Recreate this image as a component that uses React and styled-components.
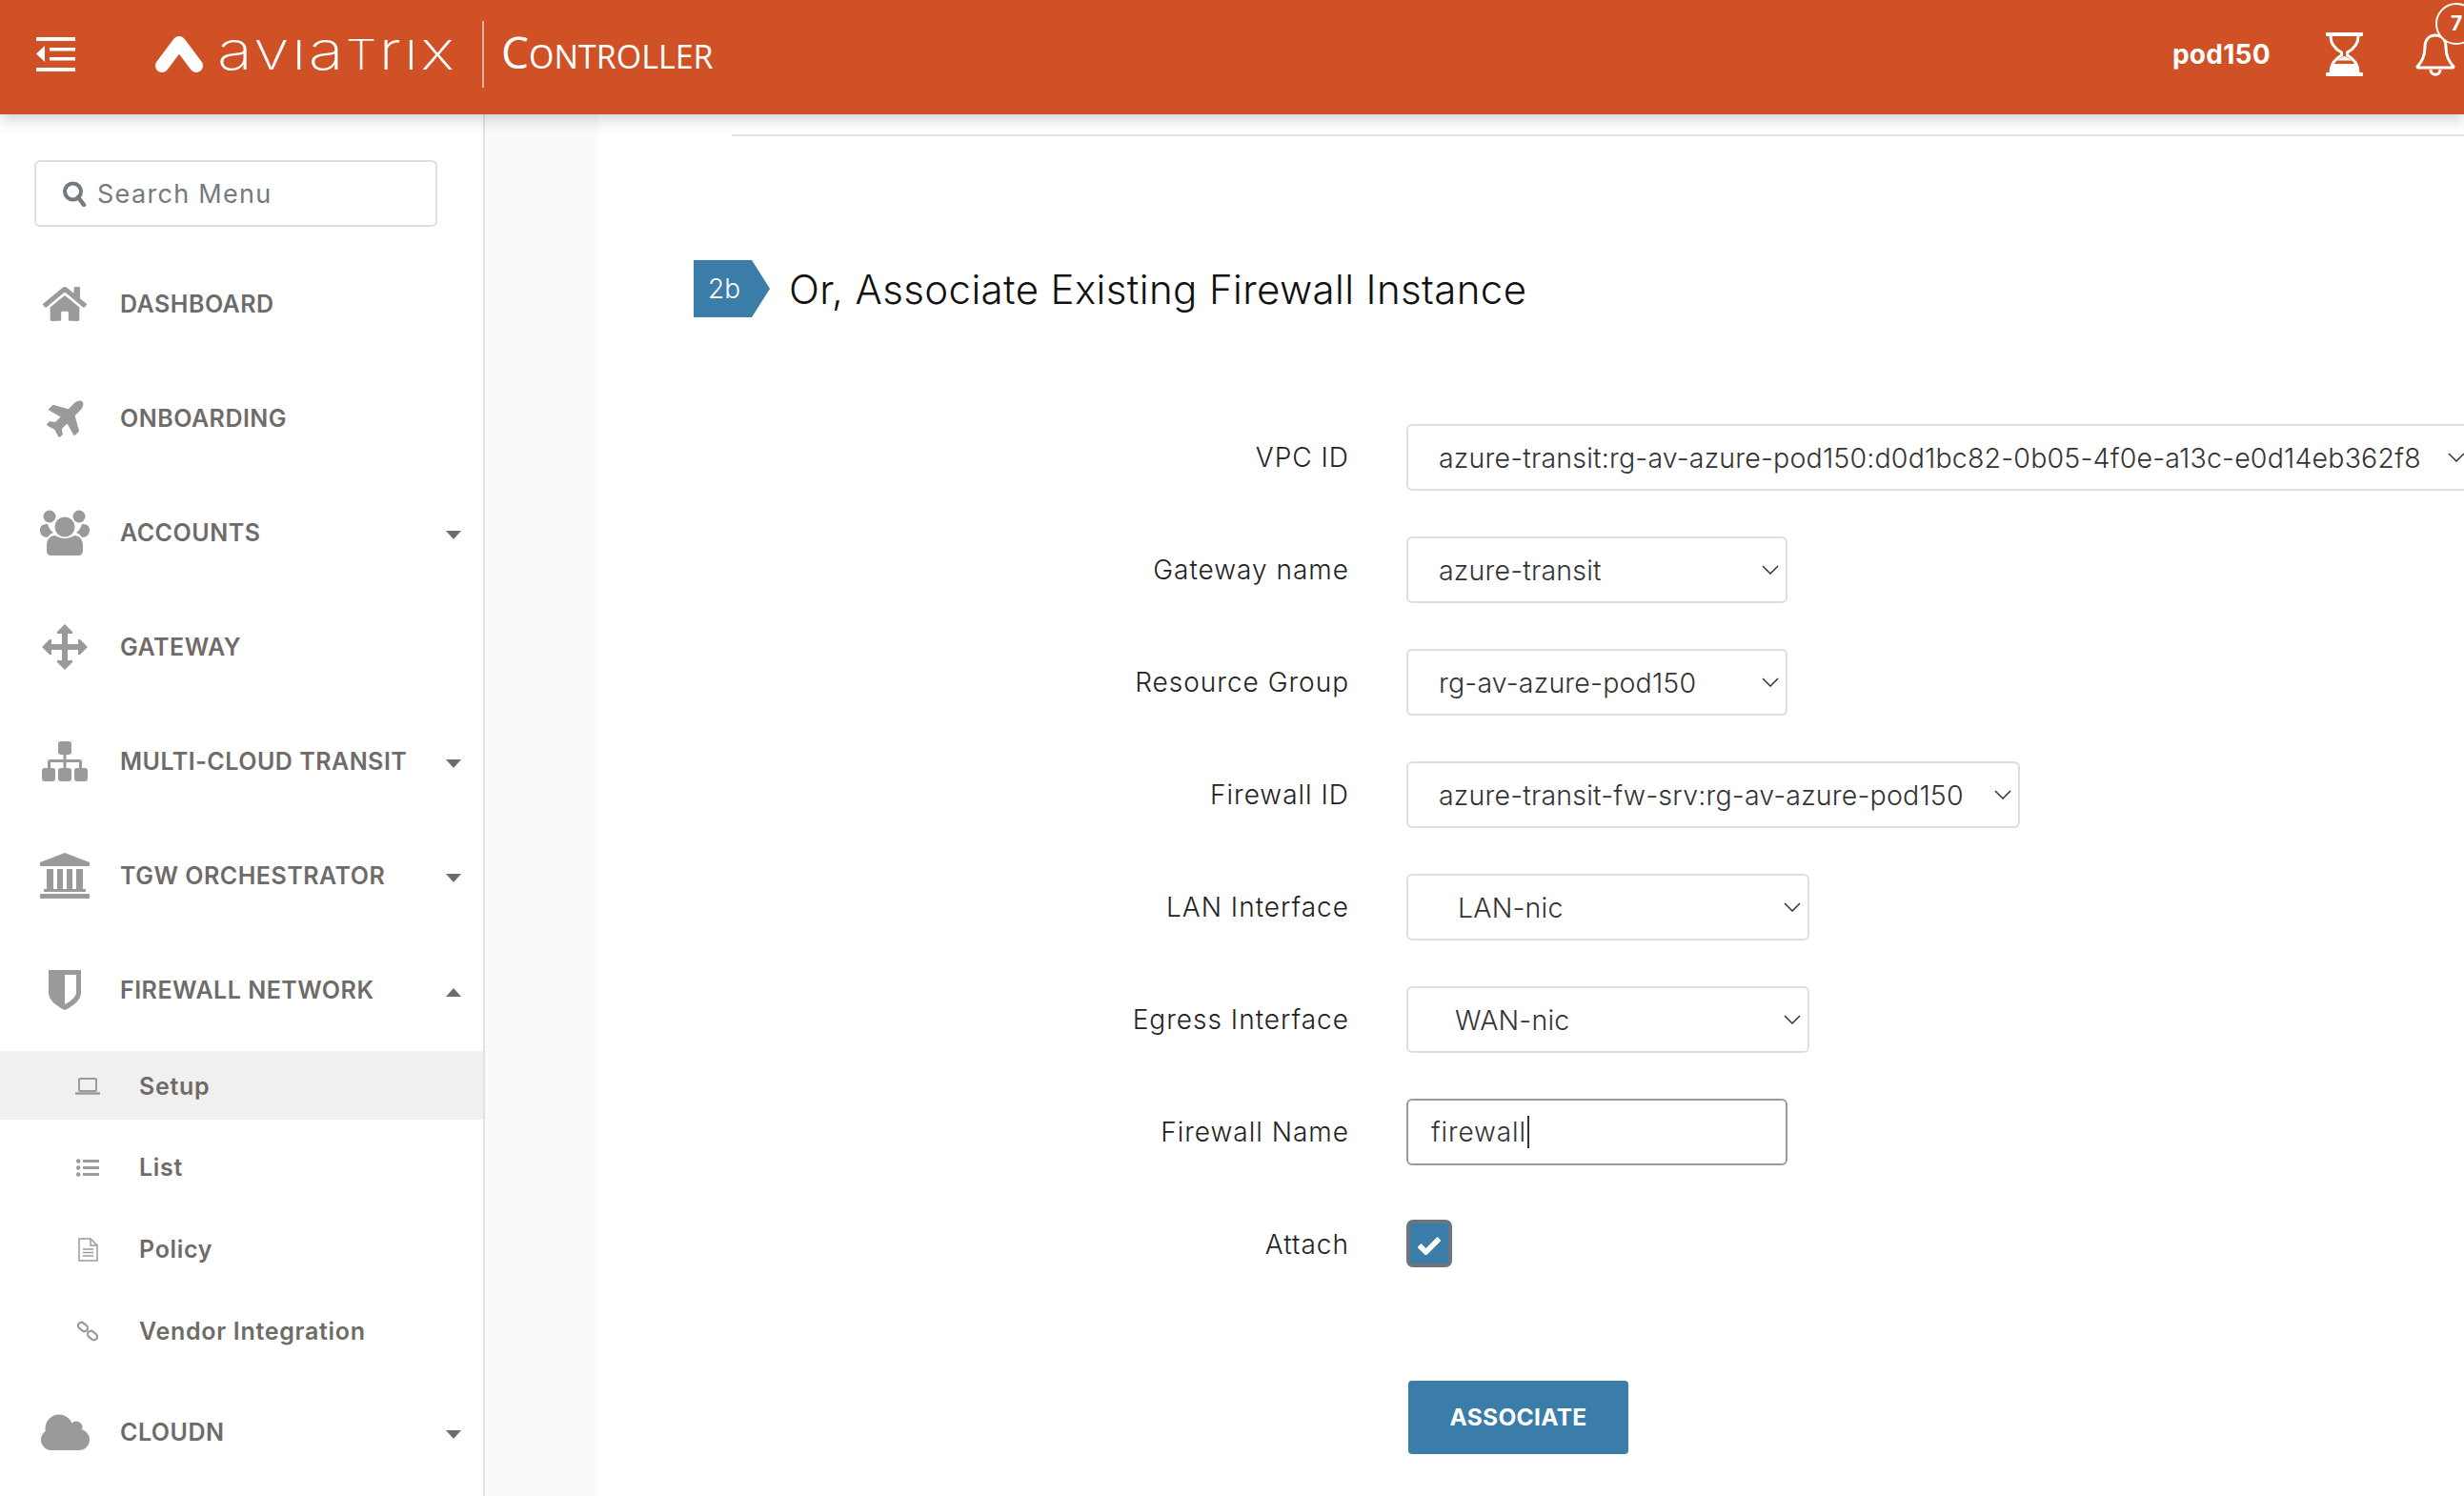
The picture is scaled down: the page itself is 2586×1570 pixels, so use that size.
import React from "react";
import styled, { createGlobalStyle } from "styled-components";
import { FaPlane, FaHome } from "react-icons/fa";

const UI_FONT = `Inter, "Open Sans", "Liberation Sans", sans-serif`;
const BLUE = "#3a7da9";

const GlobalStyle = createGlobalStyle`
  html, body {
    margin: 0;
    padding: 0;
    background: #fff;
    overflow: hidden;
  }
  * { box-sizing: border-box; }
`;

const Page = styled.div`
  width: 2586px;
  height: 1570px;
  display: flex;
  flex-direction: column;
  overflow: hidden;
  font-family: ${UI_FONT};
`;

/* header */
const Header = styled.header`
  position: relative;
  z-index: 2;
  flex: 0 0 120px;
  display: flex;
  align-items: center;
  background: #d05125;
  color: #fff;
  padding: 0 0 7px 38px;
  box-shadow: 0 6px 14px rgba(70, 80, 95, 0.24);
`;
const LogoMark = styled.svg`
  width: 52px;
  height: 38px;
  margin-left: 83px;
  margin-right: 14px;
`;
const Wordmark = styled.div`
  width: 246px;
  font-weight: 200;
  font-size: 57px;
  line-height: 60px;
  letter-spacing: 2px;
  margin-top: -4px;
  white-space: nowrap;
  transform: scaleX(1.2);
  transform-origin: left center;
  span {
    font-size: 43px;
  }
`;
const Divider = styled.div`
  width: 2px;
  height: 70px;
  margin: 0 18px 0 32px;
  background: rgba(255, 255, 255, 0.55);
`;
const Product = styled.div`
  font-family: "Open Sans", sans-serif;
  font-size: 34px;
  line-height: 40px;
  white-space: nowrap;
  span {
    font-size: 46px;
  }
`;
const HeaderRight = styled.div`
  margin-left: auto;
  display: flex;
  align-items: center;
`;
const UserName = styled.div`
  font-size: 28px;
  font-weight: 700;
  letter-spacing: 0.3px;
  margin-right: 58px;
`;
const BellWrap = styled.div`
  position: relative;
  width: 42px;
  height: 46px;
  margin-left: 55px;
  margin-right: 9px;
`;
const BellBadge = styled.div`
  position: absolute;
  left: 21px;
  top: -31px;
  width: 44px;
  height: 44px;
  border: 2px solid #fff;
  border-radius: 50%;
  background: #d05125;
  font-size: 21px;
  font-weight: 700;
  line-height: 40px;
  text-align: center;
`;

/* layout under the header */
const Body = styled.div`
  flex: 1;
  display: flex;
  min-height: 0;
`;
const Sidebar = styled.aside`
  flex: 0 0 509px;
  border-right: 2px solid #e2e2e2;
  background: #fff;
  padding-top: 48px;
`;
const Gutter = styled.div`
  flex: 0 0 119px;
  background: #f9fafa;
`;
const Main = styled.main`
  flex: 1;
  min-width: 0;
  background: #fff;
  padding-top: 21px;
`;

/* sidebar */
const SearchBox = styled.div`
  width: 423px;
  height: 70px;
  margin-left: 36px;
  margin-bottom: 20px;
  display: flex;
  align-items: center;
  padding-left: 27px;
  gap: 11px;
  border: 2px solid #dedede;
  border-radius: 6px;
  color: #737a80;
  font-size: 27px;
  letter-spacing: 1.3px;
`;
const NavRow = styled.div`
  height: 120px;
  padding-top: 2px;
  display: flex;
  align-items: center;
  color: #6f6b68;
  font-size: 25px;
  font-weight: 600;
  letter-spacing: 0.5px;
  white-space: nowrap;
`;
const NavIcon = styled.div`
  flex: 0 0 56px;
  margin-left: 40px;
  margin-right: 30px;
  display: flex;
  justify-content: center;
  color: #9b9a99;
`;
const Caret = styled.div`
  margin-left: auto;
  margin-right: 23px;
  width: 0;
  height: 0;
  border-left: 8px solid transparent;
  border-right: 8px solid transparent;
  border-top: ${(p) => (p.$up ? "0" : "9px solid #6f6b68")};
  border-bottom: ${(p) => (p.$up ? "9px solid #6f6b68" : "0")};
  margin-top: 4px;
`;
const PlaneIcon = styled(FaPlane)`
  transform: translate(3px, -2px) rotate(-45deg);
`;
const SubList = styled.div`
  margin-top: 5px;
  margin-bottom: 3px;
`;
const SubRow = styled.div`
  height: ${(p) => (p.$active ? "72px" : "86px")};
  margin-bottom: ${(p) => (p.$active ? "6px" : "0")};
  padding-top: 2px;
  background: ${(p) => (p.$active ? "#f0f0f0" : "transparent")};
  display: flex;
  align-items: center;
  color: #6f6b68;
  font-size: 25px;
  font-weight: 600;
  letter-spacing: 0.7px;
`;
const SubIcon = styled.div`
  flex: 0 0 32px;
  margin-left: 76px;
  margin-right: 38px;
  display: flex;
  justify-content: center;
  color: #9b9a99;
`;

/* main panel */
const Rule = styled.div`
  height: 2px;
  margin-left: 140px;
  background: #e2e2e2;
`;
const Heading = styled.div`
  margin-top: 130px;
  margin-left: 100px;
  display: flex;
  align-items: center;
  height: 60px;
`;
const StepBadge = styled.div`
  width: 80px;
  height: 60px;
  padding-left: 15px;
  background: ${BLUE};
  clip-path: polygon(0 0, 61px 0, 100% 50%, 61px 100%, 0 100%);
  color: #fff;
  font-size: 28px;
  font-weight: 300;
  line-height: 60px;
`;
const Title = styled.h2`
  margin: 0 0 0 20px;
  font-size: 42px;
  font-weight: 300;
  color: #111;
  letter-spacing: 0.38px;
  white-space: nowrap;
`;
const Form = styled.div`
  margin-top: 112px;
  display: flex;
  flex-direction: column;
  gap: 48px;
`;
const Row = styled.div`
  height: 70px;
  display: flex;
  align-items: center;
`;
const Label = styled.label`
  flex: 0 0 788px;
  margin-right: 60px;
  text-align: right;
  font-size: 28px;
  font-weight: 350;
  color: #222;
  letter-spacing: 1px;
`;
const SelectWrap = styled.div`
  position: relative;
  flex: 0 0 ${(p) => p.$width}px;
  height: 70px;
`;
const Select = styled.select`
  appearance: none;
  width: 100%;
  height: 100%;
  padding: 0 0 0 ${(p) => p.$pad}px;
  border: 2px solid #dedede;
  border-radius: 6px;
  background: #fff;
  color: #333;
  font-family: ${UI_FONT};
  font-size: 28.5px;
  font-weight: 350;
  letter-spacing: 0.2px;
`;
const Chevron = styled.svg`
  position: absolute;
  right: 9px;
  top: 30px;
  width: 18px;
  height: 10px;
  pointer-events: none;
`;
const TextField = styled.div`
  flex: 0 0 400px;
  height: 70px;
  display: flex;
  align-items: center;
  padding-left: 24px;
  border: 2px solid #999;
  border-radius: 6px;
  color: #333;
  font-size: 28px;
  font-weight: 350;
  letter-spacing: 0.9px;
`;
const TextCaret = styled.span`
  width: 2px;
  height: 34px;
  margin-left: 1px;
  background: #333;
`;
const Check = styled.div`
  width: 48px;
  height: 50px;
  margin-bottom: 2px;
  border: 4px solid #6c7480;
  border-radius: 7px;
  background: ${BLUE};
  display: flex;
  align-items: center;
  justify-content: center;
  padding-top: 4px;
`;
const AssociateButton = styled.button`
  display: block;
  width: 231px;
  height: 77px;
  margin: 108px 0 0 850px;
  padding: 0 0 2px;
  border: 0;
  border-radius: 4px;
  background: ${BLUE};
  color: #fff;
  font-family: ${UI_FONT};
  font-size: 24.5px;
  font-weight: 700;
  letter-spacing: 0.3px;
`;

/* icons */
const MenuIcon = () => (
  <svg width="41" height="36" viewBox="0 0 41 36" fill="#fff">
    <rect y="0" width="41" height="4" />
    <rect x="14" y="11" width="27" height="3.5" />
    <rect x="14" y="21" width="27" height="3.5" />
    <rect y="32" width="41" height="4" />
    <path d="M9 9v17L0 17.5z" />
  </svg>
);
const SearchIcon = () => (
  <svg width="26" height="28" viewBox="0 0 26 28" fill="none" stroke="#737a80">
    <circle cx="11.5" cy="12" r="8.5" strokeWidth="4" />
    <path d="M17 18l6 8" strokeWidth="4.5" strokeLinecap="round" />
  </svg>
);
const Hourglass = () => (
  <svg width="39" height="46" viewBox="0 0 39 46" fill="#fff">
    <rect width="39" height="4" rx="1" />
    <rect y="42" width="39" height="4" rx="1" />
    <path
      d="M5 4c0 8 4 13 11.500 17v3C9 28 5 34 5 42M34 4c0 8-4 13-11.500 17v3C30 28 34 34 34 42"
      fill="none"
      stroke="#fff"
      strokeWidth="3"
    />
    <path d="M5 42c0-3 .5-6 2-9h25c1.500 3 2 6 2 9z" />
    <path d="M12 29.500c2-2 4.500-3.500 7.500-4.500 3 1 5.500 2.500 7.500 4.500z" />
  </svg>
);
const Bell = () => (
  <svg width="42" height="46" viewBox="0 0 42 46" fill="none" stroke="#fff" strokeWidth="3">
    <path d="M21 3c-7 0-11 5-11 12 0 10-3 15-8 21 0 1 0 1 1 1h36c1 0 1 0 1-1-5-6-8-11-8-21 0-7-4-12-11-12z" strokeLinejoin="round" />
    <path d="M16 39c0 7 10 7 10 0" />
  </svg>
);

const IconUsers = () => (
  <svg width="52" height="48" viewBox="0 0 52 48" fill="currentColor">
    <circle cx="10" cy="7" r="6.500" />
    <circle cx="41" cy="7" r="6.500" />
    <path d="M0 21c0-4 3-6 8-6 1 4 3 7 6 9-3 1-5 3-6 5-5 0-8-3-8-8z" />
    <path d="M52 21c0-4-3-6-8-6-1 4-3 7-6 9 3 1 5 3 6 5 5 0 8-3 8-8z" />
    <circle cx="26" cy="18" r="10.500" />
    <path d="M7 37c0-6 4-10 9-10 3 2 6 3 10 3s7-1 10-3c5 0 9 4 9 10v6c0 3-2 5-5 5H12c-3 0-5-2-5-5z" />
  </svg>
);
const IconMove = () => (
  <svg width="48" height="48" viewBox="0 0 48 48" fill="currentColor">
    <path d="M24 0l8 8v2h-5v11h11v-5h2l8 8-8 8h-2v-5H27v11h5v2l-8 8-8-8v-2h5V27H10v5H8l-8-8 8-8h2v5h11V10h-5V8z" />
  </svg>
);
const IconSitemap = () => (
  <svg width="48" height="42" viewBox="0 0 48 42" fill="currentColor">
    <rect x="17" y="0" width="14" height="14" rx="3" />
    <rect x="0" y="28" width="14" height="14" rx="3" />
    <rect x="17" y="28" width="14" height="14" rx="3" />
    <rect x="34" y="28" width="14" height="14" rx="3" />
    <path d="M22.500 14h3v5H39c2 0 3 1 3 3v6h-3v-6h-13.500v6h-3v-6H9v6H6v-6c0-2 1-3 3-3h13.500z" />
  </svg>
);
const IconBank = () => (
  <svg width="52" height="48" viewBox="0 0 52 48" fill="currentColor">
    <path d="M26 0l26 10v4H0v-4z" />
    <rect x="7" y="17" width="7" height="21" />
    <rect x="18" y="17" width="6" height="21" />
    <rect x="28" y="17" width="6" height="21" />
    <rect x="38" y="17" width="7" height="21" />
    <rect x="4" y="38" width="44" height="3" />
    <rect y="43" width="52" height="5" rx="1" />
  </svg>
);
const IconShield = () => (
  <svg width="34" height="42" viewBox="0 0 34 42" fill="currentColor" fillRule="evenodd">
    <path d="M1 0h32c.6 0 1 .4 1 1v23c0 8-10 15-17 18C10 39 0 32 0 24V1c0-.6.4-1 1-1zm16 5v31c6-3 12-8 12-12.500V5z" />
  </svg>
);
const IconCloud = () => (
  <svg width="52" height="38" viewBox="0 0 52 38" fill="currentColor">
    <circle cx="20" cy="15" r="14.500" />
    <circle cx="38" cy="14" r="6.500" />
    <circle cx="12" cy="27" r="11" />
    <circle cx="41" cy="27" r="11" />
    <rect x="12" y="20" width="29" height="18" />
  </svg>
);
const IconLaptop = () => (
  <svg width="26" height="18" viewBox="0 0 26 18" fill="none" stroke="currentColor">
    <rect x="4" y="1" width="18" height="13" rx="1" strokeWidth="2" />
    <path d="M0 16.500h26" strokeWidth="2.500" />
  </svg>
);
const IconList = () => (
  <svg width="24" height="19" viewBox="0 0 24 19" fill="currentColor">
    <circle cx="2.200" cy="2.500" r="2.200" />
    <circle cx="2.200" cy="9.500" r="2.200" />
    <circle cx="2.200" cy="16.500" r="2.200" />
    <rect x="7" y="1" width="17" height="3" />
    <rect x="7" y="8" width="17" height="3" />
    <rect x="7" y="15" width="17" height="3" />
  </svg>
);
const IconDoc = () => (
  <svg width="21" height="25" viewBox="0 0 21 25" fill="none" stroke="currentColor" strokeWidth="1.500">
    <path d="M1 1h12l7 7v16H1z" />
    <path d="M13 1v7h7M5 12h11M5 15.500h11M5 19h11" />
  </svg>
);
const IconChain = () => (
  <svg width="22" height="22" viewBox="0 0 22 22" fill="none" stroke="currentColor" strokeWidth="2.200">
    <rect x="0.500" y="3" width="11" height="7" rx="3.500" transform="rotate(40 6 6.500)" />
    <rect x="10.500" y="12" width="11" height="7" rx="3.500" transform="rotate(40 16 15.500)" />
  </svg>
);

const navTop = [
  { label: "DASHBOARD", icon: <FaHome size={46} /> },
  { label: "ONBOARDING", icon: <PlaneIcon size={44} /> },
  { label: "ACCOUNTS", icon: <IconUsers />, caret: "down" },
  { label: "GATEWAY", icon: <IconMove /> },
  { label: "MULTI-CLOUD TRANSIT", icon: <IconSitemap />, caret: "down" },
  { label: "TGW ORCHESTRATOR", icon: <IconBank />, caret: "down" },
  { label: "FIREWALL NETWORK", icon: <IconShield />, caret: "up" },
];
const subNav = [
  { label: "Setup", icon: <IconLaptop />, active: true },
  { label: "List", icon: <IconList /> },
  { label: "Policy", icon: <IconDoc /> },
  { label: "Vendor Integration", icon: <IconChain /> },
];
const selects = [
  { label: "VPC ID", value: "azure-transit:rg-av-azure-pod150:d0d1bc82-0b05-4f0e-a13c-e0d14eb362f8", width: 1120, pad: 32 },
  { label: "Gateway name", value: "azure-transit", width: 400, pad: 32 },
  { label: "Resource Group", value: "rg-av-azure-pod150", width: 400, pad: 32 },
  { label: "Firewall ID", value: "azure-transit-fw-srv:rg-av-azure-pod150", width: 644, pad: 32 },
  { label: "LAN Interface", value: "LAN-nic", width: 423, pad: 52 },
  { label: "Egress Interface", value: "WAN-nic", width: 423, pad: 49 },
];

const NavItem = ({ item }) => (
  <NavRow>
    <NavIcon>{item.icon}</NavIcon>
    {item.label}
    {item.caret && <Caret $up={item.caret === "up"} />}
  </NavRow>
);

export default function App() {
  return (
    <Page>
      <GlobalStyle />
      <Header>
        <MenuIcon />
        <LogoMark viewBox="0 0 52 38">
          <path
            d="M8 31L26 7l18 24"
            fill="none"
            stroke="#fff"
            strokeWidth="14"
            strokeLinecap="round"
            strokeLinejoin="round"
          />
        </LogoMark>
        <Wordmark>
          avıa<span>T</span>rıx
        </Wordmark>
        <Divider />
        <Product>
          <span>C</span>ONTROLLER
        </Product>
        <HeaderRight>
          <UserName>pod150</UserName>
          <Hourglass />
          <BellWrap>
            <Bell />
            <BellBadge>7</BellBadge>
          </BellWrap>
        </HeaderRight>
      </Header>
      <Body>
        <Sidebar>
          <SearchBox>
            <SearchIcon />
            Search Menu
          </SearchBox>
          {navTop.map((item) => (
            <NavItem key={item.label} item={item} />
          ))}
          <SubList>
            {subNav.map((item) => (
              <SubRow key={item.label} $active={item.active}>
                <SubIcon>{item.icon}</SubIcon>
                {item.label}
              </SubRow>
            ))}
          </SubList>
          <NavItem item={{ label: "CLOUDN", icon: <IconCloud />, caret: "down" }} />
        </Sidebar>
        <Gutter />
        <Main>
          <Rule />
          <Heading>
            <StepBadge>2b</StepBadge>
            <Title>Or, Associate Existing Firewall Instance</Title>
          </Heading>
          <Form>
            {selects.map((s) => (
              <Row key={s.label}>
                <Label>{s.label}</Label>
                <SelectWrap $width={s.width}>
                  <Select $pad={s.pad} defaultValue={s.value}>
                    <option value={s.value}>{s.value}</option>
                  </Select>
                  <Chevron viewBox="0 0 18 10" fill="none" stroke="#333" strokeWidth="1.500">
                    <path d="M1 1l8 8 8-8" />
                  </Chevron>
                </SelectWrap>
              </Row>
            ))}
            <Row>
              <Label>Firewall Name</Label>
              <TextField>
                firewall
                <TextCaret />
              </TextField>
            </Row>
            <Row>
              <Label>Attach</Label>
              <Check>
                <svg width="26" height="20" viewBox="0 0 26 20" fill="none" stroke="#fff" strokeWidth="5.500">
                  <path d="M2.500 10l7 7L23.500 3" />
                </svg>
              </Check>
            </Row>
          </Form>
          <AssociateButton>ASSOCIATE</AssociateButton>
        </Main>
      </Body>
    </Page>
  );
}
